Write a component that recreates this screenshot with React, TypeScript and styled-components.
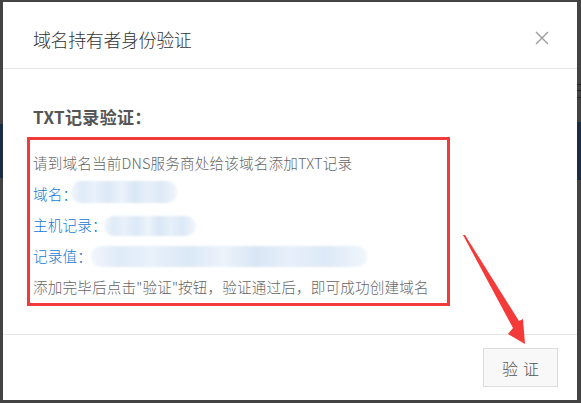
import React from "react";
import styled, { createGlobalStyle } from "styled-components";

const Global = createGlobalStyle`
  html, body { margin: 0; padding: 0; }
  body {
    background: #434343;
    width: 581px;
    height: 403px;
    overflow: hidden;
    font-family: "Noto Sans CJK SC", "Noto Sans", sans-serif;
  }
`;

const Screen = styled.div`
  position: relative;
  width: 581px;
  height: 403px;
  box-sizing: border-box;
  padding: 2px 4px 3px 3px;
  display: flex;
`;

const BackStrip = styled.div<{ $side: "left" | "right"; $top: number; $h: number; $c: string }>`
  position: absolute;
  ${(p) => (p.$side === "left" ? "left: 0;" : "right: 0;")}
  top: ${(p) => p.$top}px;
  width: 4px;
  height: ${(p) => p.$h}px;
  background: ${(p) => p.$c};
`;

const Dialog = styled.div`
  position: relative;
  z-index: 1;
  flex: 1;
  background: #fff;
  display: flex;
  flex-direction: column;
`;

const Header = styled.div`
  height: 67px;
  box-sizing: border-box;
  border-bottom: 1px solid #e6e6e6;
  display: flex;
  align-items: flex-start;
  justify-content: space-between;
  padding: 24px 28px 0 30px;
`;

const Title = styled.div`
  font-size: 18px;
  font-weight: 300;
  line-height: 26px;
  color: #333;
  letter-spacing: -0.4px;
`;

const Close = styled.button`
  border: 0;
  background: none;
  padding: 0;
  margin-top: 5px;
  width: 14px;
  height: 14px;
  display: flex;
  cursor: pointer;
`;

const Body = styled.div`
  height: 266px;
  box-sizing: border-box;
  padding: 36px 0 0 24px;
  border-bottom: 1px solid #e6e6e6;
`;

const SectionTitle = styled.div`
  font-size: 17px;
  font-weight: bold;
  line-height: 24px;
  color: #555;
  padding-left: 6px;
  margin-bottom: 8px;
  letter-spacing: 0.3px;
`;

const RedBox = styled.div`
  width: 423px;
  height: 169px;
  box-sizing: border-box;
  border: 3px solid #f33a3a;
  padding: 7px 0 0 3px;
`;

const Line = styled.div<{ $blue?: boolean }>`
  font-size: 14.6px;
  font-weight: 300;
  line-height: 31px;
  height: 31px;
  color: ${(p) => (p.$blue ? "#1679d3" : "#666")};
  white-space: nowrap;
  display: flex;
  align-items: center;
  letter-spacing: 0.15px;
`;

const Blur = styled.span<{ $w: number; $h: number; $ml: number; $dy: number }>`
  display: inline-block;
  width: ${(p) => p.$w}px;
  height: ${(p) => p.$h}px;
  margin-left: ${(p) => p.$ml}px;
  margin-top: ${(p) => p.$dy}px;
  border-radius: 10px;
  background:
    linear-gradient(90deg,
      #f2f7fc 0%, #dfebf8 10%, #e9f1fa 22%, #dbe8f6 35%, #ecf3fb 48%,
      #d8e6f5 60%, #e7f0fa 72%, #dde9f7 85%, #f0f6fc 100%);
  filter: blur(1.2px);
`;

const Footer = styled.div`
  flex: 1;
  display: flex;
  justify-content: flex-end;
  align-items: flex-start;
  padding: 13px 19px 0 0;
`;

const Button = styled.button`
  width: 75px;
  height: 39px;
  border: 1px solid #dcdcdc;
  background: #f8f8f8;
  color: #555;
  font-family: "Noto Sans CJK SC", sans-serif;
  font-size: 16px;
  font-weight: 300;
  letter-spacing: 5px;
  padding: 0 0 0 5px;
  cursor: pointer;
`;

const Arrow = styled.svg`
  position: absolute;
  left: 0;
  top: 0;
  pointer-events: none;
`;

export default function App() {
  return (
    <>
      <Global />
      <Screen>
        <BackStrip $side="left" $top={124} $h={54} $c="#1b2c47" />
        <BackStrip $side="right" $top={122} $h={58} $c="#1b2c47" />
        <BackStrip $side="right" $top={84} $h={1} $c="#222" />
        <BackStrip $side="right" $top={90} $h={1} $c="#222" />
        <BackStrip $side="right" $top={97} $h={1} $c="#222" />
        <Dialog>
          <Header>
            <Title>域名持有者身份验证</Title>
            <Close aria-label="关闭">
              <svg width="14" height="14" viewBox="0 0 14 14">
                <path d="M1 1 L13 13 M13 1 L1 13" stroke="#9a9a9a" strokeWidth="1.3" fill="none" />
              </svg>
            </Close>
          </Header>
          <Body>
            <SectionTitle>TXT记录验证：</SectionTitle>
            <RedBox>
              <Line>请到域名当前DNS服务商处给该域名添加TXT记录</Line>
              <Line $blue>
                域名：<Blur $w={106} $h={22} $ml={-6} $dy={-3} />
              </Line>
              <Line $blue>
                主机记录：<Blur $w={92} $h={20} $ml={-3} $dy={2} />
              </Line>
              <Line $blue>
                记录值：<Blur $w={276} $h={21} $ml={-1} $dy={2} />
              </Line>
              <Line>添加完毕后点击"验证"按钮，验证通过后，即可成功创建域名</Line>
            </RedBox>
          </Body>
          <Footer>
            <Button>验证</Button>
          </Footer>
          <Arrow width="574" height="398" viewBox="3 2 574 398">
            <polygon
              points="463,235 465,235 519,321 523,319 525,344 508,334 513,328"
              fill="#f53a3a"
            />
          </Arrow>
        </Dialog>
      </Screen>
    </>
  );
}
